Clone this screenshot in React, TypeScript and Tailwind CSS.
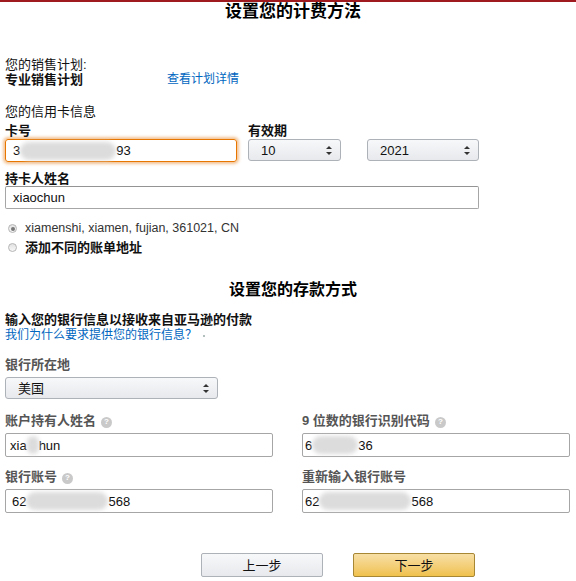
import React from "react";

function Blur({ w }: { w: number }) {
  return (
    <span
      className="inline-block h-[18px] align-middle bg-[#dcdcdc] blur-[2px] rounded-full"
      style={{ width: w }}
    />
  );
}

function Arrows() {
  return (
    <svg width="6" height="9" viewBox="0 0 6 9" className="shrink-0">
      <path d="M3 0 L6 3 L0 3 Z" fill="#333" />
      <path d="M3 9 L6 6 L0 6 Z" fill="#333" />
    </svg>
  );
}

function Select({ value, className }: { value: string; className: string }) {
  return (
    <div
      className={
        "flex h-[22px] items-center justify-between rounded-[3px] border border-[#adb1b8] bg-gradient-to-b from-[#f7f8fa] to-[#e7e9ec] pl-[12px] pr-[8px] " +
        className
      }
    >
      <span>{value}</span>
      <Arrows />
    </div>
  );
}

function Help() {
  return (
    <span className="ml-[5px] inline-flex h-[11px] w-[11px] items-center justify-center rounded-full bg-[#c9c9c9] align-[1px] text-[8px] font-bold leading-none text-white">
      ?
    </span>
  );
}

function Radio({ checked }: { checked?: boolean }) {
  return (
    <span className="flex h-[9px] w-[9px] items-center justify-center rounded-full border border-[#b5b5b5] bg-gradient-to-b from-[#e2e2e2] to-[#f7f7f7]">
      {checked && <span className="h-[4px] w-[4px] rounded-full bg-[#777]" />}
    </span>
  );
}

export default function App() {
  return (
    <div className="min-h-[581px] w-[576px] bg-white font-['Liberation_Sans','Noto_Sans_CJK_SC',sans-serif] text-[13px] leading-[15px] text-[#111]">
      <div className="h-[2px] bg-[#9e1a1f]" />

      <h1 className="pl-[10px] text-center text-[17px] font-bold leading-[20px] text-black">
        设置您的计费方法
      </h1>

      <div className="px-[5px]">
        <div className="mt-[35px]">您的销售计划:</div>
        <div className="flex items-end">
          <span className="w-[162px] font-bold">专业销售计划</span>
          <span className="text-[12px] text-[#0066c0]">查看计划详情</span>
        </div>

        <div className="mt-[17px]">您的信用卡信息</div>

        <div className="mt-[4px] flex">
          <div className="w-[243px]">
            <div className="font-bold leading-[16px]">卡号</div>
            <div className="flex h-[23px] w-[232px] items-center rounded-[3px] border border-[#e77600] pl-[7px] shadow-[0_0_3px_2px_rgba(228,121,17,0.45)]">
              3<Blur w={96} />
              93
            </div>
          </div>
          <div>
            <div className="font-bold leading-[16px]">有效期</div>
            <div className="flex gap-[26px]">
              <Select value="10" className="w-[93px]" />
              <Select value="2021" className="w-[112px]" />
            </div>
          </div>
        </div>

        <div className="mt-[9px] font-bold leading-[15px]">持卡人姓名</div>
        <div className="flex h-[23px] w-[474px] items-center rounded-[2px] border border-[#a6a6a6] border-t-[#949494] pl-[7px]">
          xiaochun
        </div>

        <div className="mt-[12px] flex items-center gap-[8px] pl-[3px] text-[12.5px] text-[#333]">
          <Radio checked />
          <span>xiamenshi, xiamen, fujian, 361021, CN</span>
        </div>
        <div className="mt-[4px] flex items-center gap-[8px] pl-[3px]">
          <Radio />
          <span className="font-bold">添加不同的账单地址</span>
        </div>
      </div>

      <h2 className="mt-[25px] pl-[10px] text-center text-[16px] font-bold leading-[20px] text-black">
        设置您的存款方式
      </h2>

      <div className="px-[5px]">
        <div className="mt-[12px] font-bold">输入您的银行信息以接收来自亚马逊的付款</div>
        <div className="mt-[1px] flex items-center text-[12px] text-[#0066c0]">
          我们为什么要求提供您的银行信息？
          <span className="ml-[6px] h-[2px] w-[2px] rounded-full bg-[#9aa]" />
        </div>

        <div className="mt-[14px] font-bold text-[#555]">银行所在地</div>
        <div className="mt-[5px]">
          <Select value="美国" className="w-[213px]" />
        </div>

        <div className="mt-[14px] flex gap-[29px]">
          <div className="w-[268px]">
            <div className="font-bold text-[#555]">
              账户持有人姓名
              <Help />
            </div>
            <div className="mt-[5px] flex h-[24px] items-center rounded-[2px] border border-[#a6a6a6] pl-[4px]">
              xia<Blur w={12} />
              hun
            </div>
            <div className="mt-[12px] font-bold text-[#555]">
              银行账号
              <Help />
            </div>
            <div className="mt-[5px] flex h-[24px] items-center rounded-[2px] border border-[#a6a6a6] pl-[6px]">
              62<Blur w={82} />
              568
            </div>
          </div>
          <div className="w-[268px]">
            <div className="font-bold text-[#555]">
              9 位数的银行识别代码
              <Help />
            </div>
            <div className="mt-[5px] flex h-[24px] items-center rounded-[2px] border border-[#a6a6a6] pl-[2px]">
              6<Blur w={46} />
              36
            </div>
            <div className="mt-[12px] font-bold text-[#555]">重新输入银行账号</div>
            <div className="mt-[5px] flex h-[24px] items-center rounded-[2px] border border-[#a6a6a6] pl-[2px]">
              62<Blur w={92} />
              568
            </div>
          </div>
        </div>
      </div>

      <div className="mt-[40px] flex gap-[30px] pl-[201px]">
        <button className="h-[24px] w-[122px] rounded-[2px] border border-[#adb1b8] bg-gradient-to-b from-[#f7f8fa] to-[#e7e9ec] text-[13px] text-[#111]">
          上一步
        </button>
        <button className="h-[24px] w-[122px] rounded-[2px] border border-[#a88734] bg-gradient-to-b from-[#f7dfa5] to-[#f0c14b] text-[13px] text-[#111]">
          下一步
        </button>
      </div>
    </div>
  );
}
